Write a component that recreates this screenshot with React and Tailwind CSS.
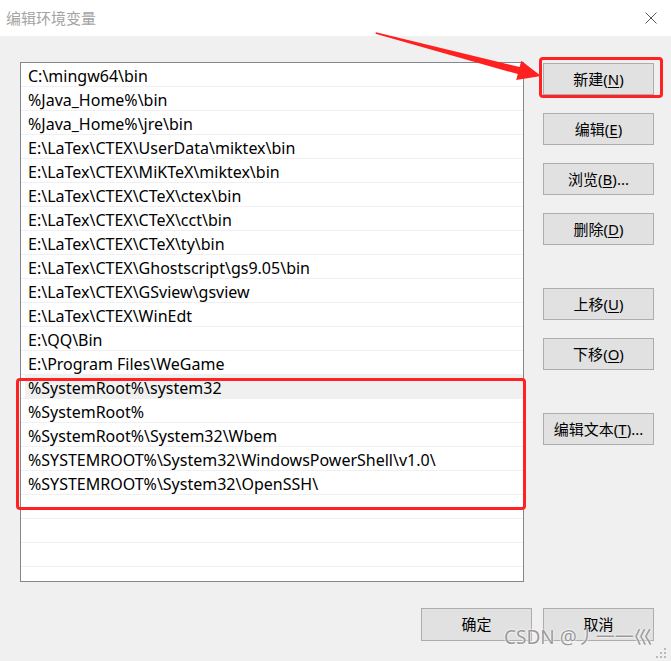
import React from "react";

const rows = [
  "C:\\mingw64\\bin",
  "%Java_Home%\\bin",
  "%Java_Home%\\jre\\bin",
  "E:\\LaTex\\CTEX\\UserData\\miktex\\bin",
  "E:\\LaTex\\CTEX\\MiKTeX\\miktex\\bin",
  "E:\\LaTex\\CTEX\\CTeX\\ctex\\bin",
  "E:\\LaTex\\CTEX\\CTeX\\cct\\bin",
  "E:\\LaTex\\CTEX\\CTeX\\ty\\bin",
  "E:\\LaTex\\CTEX\\Ghostscript\\gs9.05\\bin",
  "E:\\LaTex\\CTEX\\GSview\\gsview",
  "E:\\LaTex\\CTEX\\WinEdt",
  "E:\\QQ\\Bin",
  "E:\\Program Files\\WeGame",
  "%SystemRoot%\\system32",
  "%SystemRoot%",
  "%SystemRoot%\\System32\\Wbem",
  "%SYSTEMROOT%\\System32\\WindowsPowerShell\\v1.0\\",
  "%SYSTEMROOT%\\System32\\OpenSSH\\",
  "",
  "",
  "",
  "",
];

function Btn({ label, k, suffix = "", className = "" }) {
  return (
    <div
      className={
        "w-[111px] h-[32px] bg-[#e1e1e1] border border-[#adadad] flex items-center justify-center text-[15px] text-black leading-none " +
        className
      }
    >
      <span>
        {label}
        {k ? (
          <>
            (<span className="underline underline-offset-2">{k}</span>){suffix}
          </>
        ) : null}
      </span>
    </div>
  );
}

export default function App() {
  return (
    <div
      className="relative w-[671px] h-[661px] bg-[#f0f0f0] overflow-hidden flex flex-col"
      style={{ fontFamily: '"Noto Sans", "Noto Sans CJK SC", sans-serif' }}
    >
      {/* title bar */}
      <div className="h-[36px] bg-white flex items-center justify-between pl-[6px] pr-[14px] shrink-0">
        <span className="text-[15px] text-[#a3a3a3]">编辑环境变量</span>
        <svg width="12" height="12" viewBox="0 0 12 12">
          <path d="M0.5 0.5 L11.5 11.5 M11.5 0.5 L0.5 11.5" stroke="#555" strokeWidth="1" fill="none" />
        </svg>
      </div>

      {/* body */}
      <div className="flex pl-[20px] pt-[26px]">
        <div className="w-[504px] h-[520px] bg-white border border-[#828790] overflow-hidden">
          {rows.map((r, i) => (
            <div key={i} className="h-[24px] border-b border-[#f0f0f0] flex items-center">
              <div
                className={
                  "h-full flex items-center pt-[2px] flex-1 text-[16px] leading-none text-black whitespace-pre " +
                  (i === 13 ? "ml-[4px] pl-[3px] bg-[#f0f0f0]" : "pl-[7px]")
                }
              >
                {r}
              </div>
            </div>
          ))}
        </div>

        <div className="ml-[19px] pt-px flex flex-col">
          <Btn label="新建" k="N" />
          <Btn label="编辑" k="E" className="mt-[18px]" />
          <Btn label="浏览" k="B" suffix="..." className="mt-[18px]" />
          <Btn label="删除" k="D" className="mt-[18px]" />
          <Btn label="上移" k="U" className="mt-[43px]" />
          <Btn label="下移" k="O" className="mt-[18px]" />
          <Btn label="编辑文本" k="T" suffix="..." className="mt-[43px]" />
        </div>
      </div>

      {/* bottom buttons */}
      <div className="flex justify-end gap-[11px] pr-[17px] mt-[26px]">
        <div className="w-[111px] h-[33px] bg-[#e1e1e1] border border-[#adadad] flex items-center justify-center text-[15px] text-black">确定</div>
        <div className="w-[111px] h-[33px] bg-[#e1e1e1] border border-[#adadad] flex items-center justify-center text-[15px] text-black">取消</div>
      </div>

      {/* annotations */}
      <div className="absolute left-[539px] top-[57px] w-[124px] h-[41px] border-[3px] border-[#ff2222] rounded-[4px]" />
      <div className="absolute left-[16px] top-[378px] w-[510px] h-[132px] border-[3px] border-[#ff2222] rounded-[4px]" />
      <svg className="absolute left-0 top-0 pointer-events-none" width="671" height="661">
        <polygon
          points="376,32.2 519.6,67 521.3,60.7 541,76 516.2,80.1 517.8,74.1 375.4,33.8"
          fill="#ff2020"
        />
        <g fill="#b8b8b8">
          <rect x="664" y="648" width="2" height="2" />
          <rect x="660" y="652" width="2" height="2" />
          <rect x="664" y="652" width="2" height="2" />
          <rect x="656" y="656" width="2" height="2" />
          <rect x="660" y="656" width="2" height="2" />
          <rect x="664" y="656" width="2" height="2" />
        </g>
      </svg>

      {/* watermark */}
      <div
        className="absolute left-[504px] top-[628px] text-[19px] text-[#9a9a9a] leading-none whitespace-nowrap"
        style={{ textShadow: "0 0 2px #fff, 0 0 2px #fff" }}
      >
        CSDN @丿一一巛
      </div>
    </div>
  );
}
